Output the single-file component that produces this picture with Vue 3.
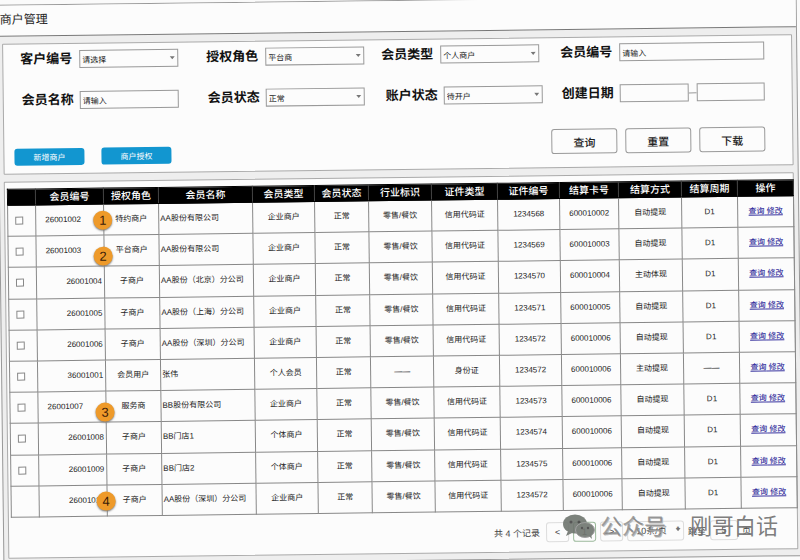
<script setup>
const rows = [
  { code: '26001002', top: true, badge: 1, role: '特约商户', name: 'AA股份有限公司', type: '企业商户', trade: '零售/餐饮', doc: '信用代码证', docNo: '1234568', card: '600010002', mode: '自动提现', cycle: 'D1' },
  { code: '26001003', top: true, badge: 2, low: true, role: '平台商户', name: 'AA股份有限公司', type: '企业商户', trade: '零售/餐饮', doc: '信用代码证', docNo: '1234569', card: '600010003', mode: '自动提现', cycle: 'D1' },
  { code: '26001004', role: '子商户', name: 'AA股份（北京）分公司', type: '企业商户', trade: '零售/餐饮', doc: '信用代码证', docNo: '1234570', card: '600010004', mode: '主动体现', cycle: 'D1' },
  { code: '26001005', role: '子商户', name: 'AA股份（上海）分公司', type: '企业商户', trade: '零售/餐饮', doc: '信用代码证', docNo: '1234571', card: '600010005', mode: '自动提现', cycle: 'D1' },
  { code: '26001006', role: '子商户', name: 'AA股份（深圳）分公司', type: '企业商户', trade: '零售/餐饮', doc: '信用代码证', docNo: '1234572', card: '600010006', mode: '自动提现', cycle: 'D1' },
  { code: '36001001', role: '会员用户', name: '张伟', type: '个人会员', trade: '——', doc: '身份证', docNo: '1234572', card: '600010006', mode: '主动提现', cycle: '——' },
  { code: '26001007', top: true, badge: 3, low: true, role: '服务商', name: 'BB股份有限公司', type: '企业商户', trade: '零售/餐饮', doc: '信用代码证', docNo: '1234573', card: '600010006', mode: '自动提现', cycle: 'D1' },
  { code: '26001008', role: '子商户', name: 'BB门店1', type: '个体商户', trade: '零售/餐饮', doc: '信用代码证', docNo: '1234574', card: '600010006', mode: '自动提现', cycle: 'D1' },
  { code: '26001009', role: '子商户', name: 'BB门店2', type: '个体商户', trade: '零售/餐饮', doc: '信用代码证', docNo: '1234575', card: '600010006', mode: '自动提现', cycle: 'D1' },
  { code: '26001010', badge: 4, noCheck: true, role: '子商户', name: 'AA股份（深圳）分公司', type: '企业商户', trade: '零售/餐饮', doc: '信用代码证', docNo: '1234572', card: '600010006', mode: '自动提现', cycle: 'D1' },
]
const heads = ['会员编号', '授权角色', '会员名称', '会员类型', '会员状态', '行业标识', '证件类型', '证件编号', '结算卡号', '结算方式', '结算周期', '操作']
const filterRows = [
  [
    { id: 'customer', label: '客户编号', kind: 'select', value: '请选择' },
    { id: 'role', label: '授权角色', kind: 'select', value: '平台商' },
    { id: 'type', label: '会员类型', kind: 'select', value: '个人商户' },
    { id: 'code', label: '会员编号', kind: 'wide', value: '请输入' },
  ],
  [
    { id: 'name', label: '会员名称', kind: 'text', value: '请输入' },
    { id: 'state', label: '会员状态', kind: 'select', value: '正常' },
    { id: 'account', label: '账户状态', kind: 'select', value: '待开户' },
    { id: 'created', label: '创建日期', kind: 'range' },
  ],
]
</script>

<template>
  <div class="stage">
    <main class="page">
      <h1 class="title">商户管理</h1>
      <div class="content">
        <form class="panel filters" @submit.prevent>
          <div v-for="(line, i) in filterRows" :key="i" class="filter-row" :class="{ second: i === 1 }">
            <div v-for="f in line" :key="f.id" class="field">
              <label :for="f.id">{{ f.label }}</label>
              <span v-if="f.kind === 'select'" class="control select">
                <select :id="f.id"><option>{{ f.value }}</option></select>
                <svg class="caret" viewBox="0 0 6 4"><path d="M0.5 0.5h5L3 3.6z" /></svg>
              </span>
              <span v-else-if="f.kind === 'range'" class="range">
                <input :id="f.id" type="text" />
                <i class="dash"></i>
                <input type="text" aria-label="结束日期" />
              </span>
              <input v-else :id="f.id" type="text" :placeholder="f.value" :class="f.kind === 'wide' ? 'wide' : 'control'" />
            </div>
          </div>
          <div class="actions">
            <div class="left">
              <button type="button" class="blue">新增商户</button>
              <button type="button" class="blue">商户授权</button>
            </div>
            <div class="right">
              <button type="submit" class="plain">查询</button>
              <button type="reset" class="plain">重置</button>
              <button type="button" class="plain">下载</button>
            </div>
          </div>
        </form>

        <section class="panel list">
          <table>
            <colgroup>
              <col class="c-check" /><col class="c-code" /><col class="c-role" /><col class="c-name" />
              <col class="c-62" /><col class="c-54" /><col class="c-63" /><col class="c-66" />
              <col class="c-62" /><col class="c-59" /><col class="c-63" /><col class="c-56" /><col class="c-56" />
            </colgroup>
            <thead>
              <tr>
                <th></th>
                <th v-for="h in heads" :key="h">{{ h }}</th>
              </tr>
            </thead>
            <tbody>
              <tr v-for="(r, i) in rows" :key="i">
                <td class="check"><input v-if="!r.noCheck" type="checkbox" :aria-label="r.code" /></td>
                <td :class="r.top ? 'parent' : 'child'">{{ r.code }}</td>
                <td class="role">
                  <span v-if="r.badge" class="badge" :class="{ low: r.low }">{{ r.badge }}</span>{{ r.role }}
                </td>
                <td class="name">{{ r.name }}</td>
                <td>{{ r.type }}</td>
                <td>正常</td>
                <td>{{ r.trade }}</td>
                <td>{{ r.doc }}</td>
                <td>{{ r.docNo }}</td>
                <td>{{ r.card }}</td>
                <td>{{ r.mode }}</td>
                <td>{{ r.cycle }}</td>
                <td class="ops"><a href="#">查询</a><a href="#">&nbsp;修改</a></td>
              </tr>
            </tbody>
          </table>
          <nav class="pager">
            <span class="total">共 4 个记录</span>
            <button type="button">&lt;</button>
            <button type="button" class="current">1</button>
            <button type="button">&gt;</button>
            <span class="select size">
              <select aria-label="每页条数"><option>10条/页</option></select>
              <svg class="caret" viewBox="0 0 6 4"><path d="M0.5 0.5h5L3 3.6z" /></svg>
            </span>
            <label for="jump">跳至</label>
            <input id="jump" type="text" value="5" />
            <span>页</span>
          </nav>
        </section>
      </div>
    </main>

    <div class="watermark">
      <svg viewBox="0 0 34 26">
        <ellipse cx="13" cy="10" rx="12" ry="9.5" />
        <path d="M6 17l-2 5 6-3z" />
        <circle class="eye" cx="9" cy="8" r="1.5" /><circle class="eye" cx="17" cy="8" r="1.5" />
        <ellipse class="front" cx="23" cy="16" rx="9.5" ry="7.5" />
        <path d="M27 22l3 3-1-5z" />
        <circle class="eye" cx="20" cy="14" r="1.2" /><circle class="eye" cx="26" cy="14" r="1.2" />
      </svg>
      <span class="hollow">公众号</span>
      <span class="dot">·</span>
      <span>刚哥白话</span>
    </div>
  </div>
</template>

<style>
body {
  background: #fafafa;
}
</style>

<style scoped>
.stage {
  position: relative;
  overflow: hidden;
  font-family: "Liberation Sans", "Noto Sans CJK SC", sans-serif;
  font-size: 8px;
  color: #222;
}
.stage * {
  box-sizing: border-box;
}
.page {
  transform: rotate(-0.7deg);
  border: 1px solid #999;
  background: #eee;
}
.title {
  margin: 0;
  height: 31px;
  padding-left: 2px;
  font-size: 12px;
  line-height: 28px;
  font-weight: 400;
  background: #fcfcfc;
  border-bottom: 1px solid #777;
}
.content {
  display: flex;
  flex-direction: column;
  gap: 7px;
  padding: 7px 4px 6px;
}
.panel {
  background: #fcfcfc;
  border: 1px solid #aaa;
  border-radius: 1px;
}
.filters {
  padding: 6px 27px 8px 10px;
}
.filter-row {
  display: grid;
  grid-template-columns: 165fr 186fr 175fr 225fr;
  margin-bottom: 23px;
}
.filter-row.second {
  grid-template-columns: 165fr 186fr 178fr 222fr;
}
.field {
  display: flex;
  align-items: center;
  justify-content: flex-end;
  gap: 7px;
  height: 18px;
}
.second .field {
  gap: 6px;
}
.field label {
  font-size: 13px;
  line-height: 18px;
  font-weight: 700;
  color: #111;
  white-space: nowrap;
}
input,
select,
button {
  font: inherit;
  color: inherit;
  margin: 0;
  border-radius: 0;
}
input[type="text"],
select {
  height: 18px;
  padding: 2px 2px 0;
  border: 1px solid #999;
  background: #fcfcfc;
  min-width: 0;
}
input::placeholder {
  color: #222;
}
select {
  appearance: none;
  width: 100%;
}
.select {
  position: relative;
  display: block;
}
.control {
  width: 99px;
}
.wide {
  width: 145px;
}
.caret {
  position: absolute;
  right: 3px;
  top: 7px;
  width: 6px;
  height: 4px;
  fill: #777;
}
.range {
  display: flex;
  align-items: center;
  width: 145px;
}
.range input {
  flex: 1;
}
.dash {
  width: 8px;
  height: 1px;
  background: #999;
}
.actions {
  display: flex;
  justify-content: space-between;
  align-items: flex-end;
  margin-top: 26px;
}
.left {
  display: flex;
  gap: 17px;
}
.right {
  display: flex;
  gap: 8px;
  margin-bottom: 5px;
}
.blue {
  width: 70px;
  height: 17px;
  padding: 0;
  border: 0;
  border-radius: 3px;
  background: #1296d0;
  color: #fff;
}
.plain {
  width: 66px;
  height: 25px;
  padding: 0;
  border: 1px solid #999;
  border-radius: 3px;
  background: #fcfcfc;
  font-size: 11px;
  font-weight: 500;
}
.list {
  padding: 6px 0 9px 2px;
}
table {
  width: 100%;
  height: 329px;
  table-layout: fixed;
  border-collapse: collapse;
}
.c-check { width: 28px; }
.c-code { width: 68px; }
.c-role { width: 55px; }
.c-name { width: 94px; }
.c-54 { width: 54px; }
.c-56 { width: 56px; }
.c-59 { width: 59px; }
.c-62 { width: 62px; }
.c-63 { width: 63px; }
.c-66 { width: 66px; }
th {
  height: 16px;
  padding: 0;
  background: #000;
  color: #fff;
  font-size: 10px;
  line-height: 14px;
  font-weight: 500;
  border: 1px solid #000;
  border-right-color: #444;
  white-space: nowrap;
}
td {
  height: 31px;
  padding: 0;
  text-align: center;
  line-height: 12px;
  border: 1px solid #888;
  white-space: nowrap;
}
.check {
  padding-right: 5px;
}
.check input {
  appearance: none;
  display: block;
  width: 8px;
  height: 8px;
  margin: 0 auto;
  border: 1px solid #888;
  background: #fff;
}
.parent {
  text-align: left;
  padding-left: 9px;
}
.child {
  text-align: right;
  padding-right: 2px;
}
.role {
  position: relative;
}
.name {
  text-align: left;
  padding-left: 1px;
}
.badge {
  position: absolute;
  z-index: 1;
  left: -11px;
  top: 6px;
  width: 19px;
  height: 19px;
  border-radius: 50%;
  background: #ee9a2a;
  color: #3a1a08;
  font-size: 13px;
  line-height: 19px;
  box-shadow: 0 1px 2px #777;
}
.badge.low {
  top: 11px;
}
.ops a {
  color: #3a35a0;
  font-weight: 500;
  text-decoration: underline;
}
.pager {
  display: flex;
  align-items: center;
  justify-content: flex-end;
  gap: 4px;
  height: 20px;
  margin-top: 11px;
  padding-right: 46px;
  font-size: 9px;
  color: #444;
}
.total {
  margin-right: 2px;
}
.pager button,
.pager select,
.pager input[type="text"] {
  height: 20px;
  padding: 0;
  text-align: center;
  background: #fcfcfc;
  border: 1px solid #ddd;
  border-radius: 3px;
}
.pager button {
  width: 23px;
}
.pager .current {
  border-color: #9ab89a;
}
.size {
  width: 57px;
}
.pager .size select {
  display: block;
  padding-right: 8px;
}
.pager input[type="text"] {
  width: 28px;
}
.watermark {
  position: absolute;
  right: 22px;
  bottom: 18px;
  display: flex;
  align-items: center;
  font-size: 22px;
  line-height: 32px;
  color: rgba(110, 110, 110, 0.9);
  white-space: nowrap;
}
.watermark svg {
  width: 34px;
  height: 26px;
  margin-right: 4px;
  fill: #6f756f;
  opacity: 0.9;
}
.hollow {
  color: rgba(120, 120, 120, 0.7);
  text-shadow: 1px 1px 0 #bbb;
}
.dot {
  width: 24px;
  text-align: center;
}
.watermark .front {
  stroke: #999;
}
.watermark .eye {
  fill: #444;
}
</style>
